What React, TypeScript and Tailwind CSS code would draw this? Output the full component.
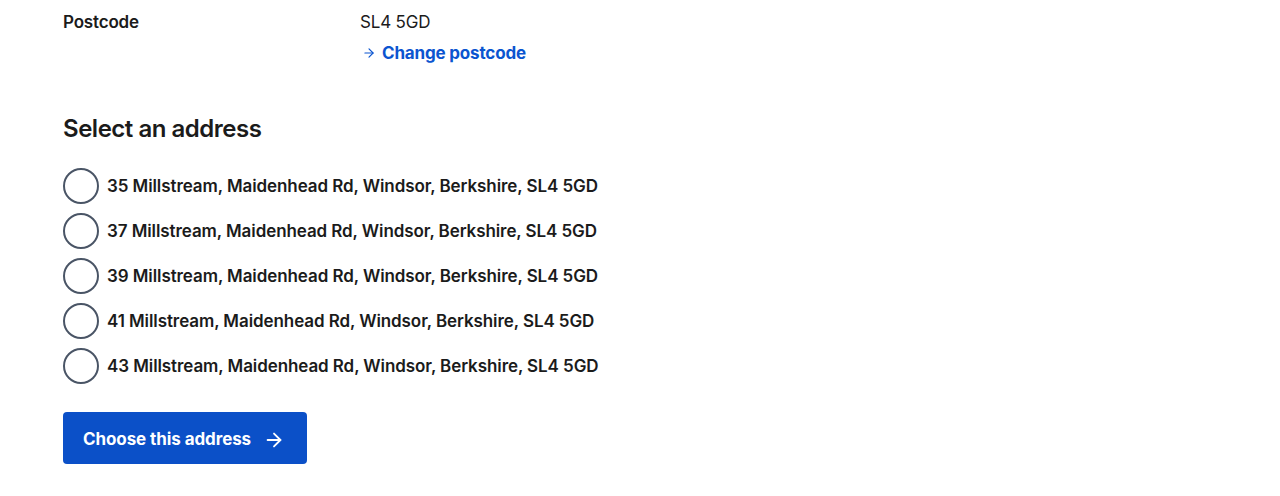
import { ArrowRight } from 'lucide-react'
import { useState } from 'react'

const addresses = [
  '35 Millstream, Maidenhead Rd, Windsor, Berkshire, SL4 5GD',
  '37 Millstream, Maidenhead Rd, Windsor, Berkshire, SL4 5GD',
  '39 Millstream, Maidenhead Rd, Windsor, Berkshire, SL4 5GD',
  '41 Millstream, Maidenhead Rd, Windsor, Berkshire, SL4 5GD',
  '43 Millstream, Maidenhead Rd, Windsor, Berkshire, SL4 5GD',
]

export default function App() {
  const [selected, setSelected] = useState<number | null>(null)

  return (
    <div className="min-h-[496px] bg-white px-[63px] pt-[10px] font-['Inter',sans-serif] text-[#1b1b1b]">
      <div className="grid grid-cols-[297px_1fr]">
        <div className="text-[17px] font-semibold leading-[24px] tracking-[-0.01em]">Postcode</div>
        <div>
          <div className="text-[17px] leading-[24px] tracking-[-0.01em]">SL4 5GD</div>
          <a
            href="#"
            className="mt-[7px] flex items-center gap-[6px] text-[17px] font-bold leading-[24px] tracking-[-0.01em] text-[#0b55d0]"
          >
            <ArrowRight size={14} strokeWidth={2} className="ml-[2px]" />
            Change postcode
          </a>
        </div>
      </div>

      <h2 className="mt-[48px] text-[24px] font-semibold leading-[32px] tracking-[-0.02em]">
        Select an address
      </h2>

      <div className="mt-[23px] flex flex-col gap-[9px]">
        {addresses.map((address, i) => (
          <label key={address} className="flex cursor-pointer items-center gap-[8px]">
            <input
              type="radio"
              name="address"
              className="sr-only"
              checked={selected === i}
              onChange={() => setSelected(i)}
            />
            <span className="flex h-[36px] w-[36px] items-center justify-center rounded-full border-2 border-[#4a5566]">
              {selected === i && <span className="h-[18px] w-[18px] rounded-full bg-[#1b1b1b]" />}
            </span>
            <span className="text-[17px] font-semibold leading-[24px] tracking-[-0.005em]">{address}</span>
          </label>
        ))}
      </div>

      <button className="mt-[28px] flex h-[52px] w-[244px] items-center gap-[12px] rounded-[4px] bg-[#0b50c8] pl-[20px] pt-[3px] text-[17px] font-bold tracking-[-0.005em] text-white">
        Choose this address
        <ArrowRight size={22} strokeWidth={2} />
      </button>
    </div>
  )
}
